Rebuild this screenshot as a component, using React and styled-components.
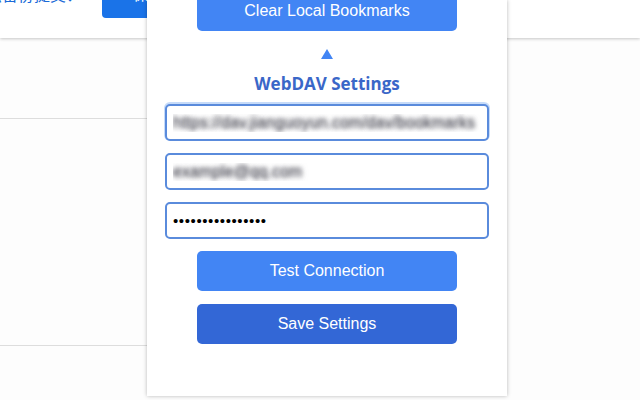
import React from "react";
import styled, { createGlobalStyle } from "styled-components";

const Global = createGlobalStyle`
  html, body { margin: 0; padding: 0; }
  body {
    width: 640px; height: 400px; overflow: hidden;
    background: #fdfdfd;
    font-family: "Liberation Sans", Arial, sans-serif;
  }
`;

const Page = styled.div`
  position: relative;
  width: 640px;
  height: 400px;
  overflow: hidden;
`;

const Header = styled.header`
  height: 38px;
  background: #ffffff;
  box-shadow: 0 1px 3px rgba(0, 0, 0, 0.22);
  overflow: hidden;
  position: relative;
  z-index: 1;
`;

const HeaderRow = styled.div`
  display: flex;
  align-items: flex-start;
  margin: -16px 0 0 -14px;
`;

const HeaderText = styled.span`
  width: 116px;
  font-family: "Noto Sans CJK SC", "Liberation Sans", sans-serif;
  font-size: 16px;
  line-height: 20px;
  color: #1a6ad8;
`;

const HeaderButton = styled.button`
  width: 90px;
  height: 34px;
  border: none;
  border-radius: 4px;
  background: #1a73e8;
  color: #fff;
  font-family: "Noto Sans CJK SC", sans-serif;
  font-size: 15px;
  line-height: 20px;
  text-align: left;
  padding: 0 0 0 31px;
  display: flex;
  align-items: flex-start;
`;

const Side = styled.div`
  width: 148px;
  padding-top: 80px;
`;

const Section = styled.div`
  height: ${(p) => p.$h}px;
  border-top: 1px solid #dddddd;
`;

const Popup = styled.div`
  position: absolute;
  left: 147px;
  top: 0;
  width: 360px;
  height: 396px;
  background: #ffffff;
  box-shadow: 0 0 4px rgba(0, 0, 0, 0.28);
  z-index: 2;
  display: flex;
  flex-direction: column;
  align-items: center;
  padding: 0 18px;
  box-sizing: border-box;
  overflow: hidden;
`;

const Button = styled.button`
  width: 260px;
  height: 40px;
  flex-shrink: 0;
  border: none;
  border-radius: 5px;
  background: ${(p) => p.$bg};
  color: #ffffff;
  font-family: "Liberation Sans", Arial, sans-serif;
  font-size: 16px;
  margin-top: ${(p) => p.$mt}px;
  cursor: pointer;
`;

const Arrow = styled.div`
  width: 0;
  height: 0;
  margin-top: 18px;
  border-left: 6px solid transparent;
  border-right: 6px solid transparent;
  border-bottom: 10px solid #4285f4;
`;

const Title = styled.h3`
  margin: 15px 0 0;
  font-family: "Open Sans", sans-serif;
  font-weight: 700;
  font-size: 17px;
  line-height: 20px;
  color: #3a67c8;
`;

const Field = styled.input`
  width: 324px;
  height: 37px;
  box-sizing: border-box;
  flex-shrink: 0;
  margin-top: ${(p) => p.$mt}px;
  border: 2px solid #5a8bdc;
  border-radius: 5px;
  padding: 0 6px;
  font-family: "Liberation Sans", Arial, sans-serif;
  font-size: ${(p) => (p.$masked ? 16 : 15)}px;
  letter-spacing: ${(p) => (p.$masked ? 0 : 0.6)}px;
  outline: none;
  background: #fff;
  color: ${(p) => (p.$masked ? "transparent" : "#000")};
  text-shadow: ${(p) =>
    p.$masked
      ? "0 0 4px rgba(70, 70, 80, 0.95), 0 0 6px rgba(120, 120, 130, 0.6)"
      : "none"};
  box-shadow: ${(p) => (p.$glow ? "0 -1px 0 1px rgba(160, 195, 245, 0.6)" : "none")};
`;

export default function App() {
  return (
    <Page>
      <Global />
      <Header>
        <HeaderRow>
          <HeaderText>法备份提交：</HeaderText>
          <HeaderButton>保存</HeaderButton>
        </HeaderRow>
      </Header>
      <Side>
        <Section $h={226} />
        <Section $h={50} />
      </Side>
      <Popup>
        <Button $bg="#4285f4" $mt={-9}>Clear Local Bookmarks</Button>
        <Arrow />
        <Title>WebDAV Settings</Title>
        <Field
          $mt={10}
          $masked
          $glow
          readOnly
          value="https://dav.jianguoyun.com/dav/bookmarks"
        />
        <Field $mt={12} $masked readOnly value="example@qq.com" />
        <Field $mt={12} type="password" readOnly value="abcdefghijklmnop" />
        <Button $bg="#4285f4" $mt={12}>Test Connection</Button>
        <Button $bg="#3367d6" $mt={13}>Save Settings</Button>
      </Popup>
    </Page>
  );
}
